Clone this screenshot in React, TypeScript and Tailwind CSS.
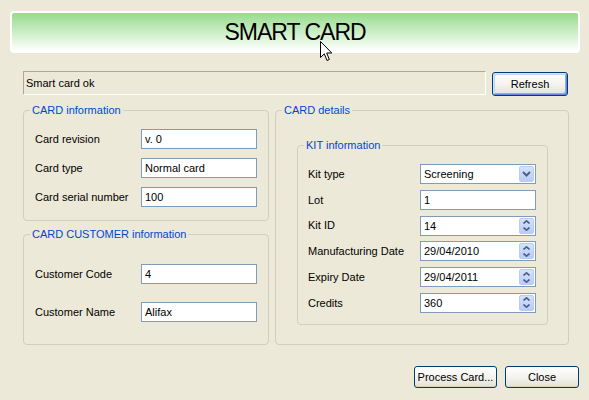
import React from "react";

type Kids = { children?: React.ReactNode };

function Group({ title, className, children }: { title: string; className: string } & Kids) {
  return (
    <div className={`rounded-[4px] border border-[#D0D0BF] ${className}`}>
      <div className="-mt-[7px] ml-[6px] w-fit bg-[#ECE9D8] px-[2px] leading-[13px] text-[#0046D5]">{title}</div>
      {children}
    </div>
  );
}

function TextBox({ value }: { value: string }) {
  return (
    <div className="h-[20px] w-[116px] border border-[#7F9DB9] bg-white pl-[3px] leading-[18px]">{value}</div>
  );
}

function Chevron({ up, big }: { up?: boolean; big?: boolean }) {
  if (big) {
    return (
      <svg width="9" height="6" viewBox="0 0 9 6">
        <polyline points="1,1 4.5,4.5 8,1" fill="none" stroke="#4D6185" strokeWidth="2" />
      </svg>
    );
  }
  return (
    <svg width="7" height="4" viewBox="0 0 7 4">
      <polyline
        points={up ? "0.5,3.5 3.5,0.8 6.5,3.5" : "0.5,0.5 3.5,3.2 6.5,0.5"}
        fill="none"
        stroke="#4D6185"
        strokeWidth="1.6"
      />
    </svg>
  );
}

function SpinBox({ value }: { value: string }) {
  return (
    <div className="flex h-[20px] w-[116px] border border-[#7F9DB9] bg-white p-[1px]">
      <span className="flex-1 pl-[2px] leading-[16px]">{value}</span>
      <div className="flex w-[15px] flex-col items-center justify-center gap-[3px] rounded-[2px] border border-[#B9CBF6] bg-gradient-to-b from-[#D6E2FD] to-[#B8CCF8]">
        <Chevron up />
        <Chevron />
      </div>
    </div>
  );
}

function ComboBox({ value }: { value: string }) {
  return (
    <div className="flex h-[20px] w-[116px] border border-[#7F9DB9] bg-white p-[1px]">
      <span className="flex-1 pl-[2px] leading-[16px]">{value}</span>
      <div className="flex w-[15px] items-center justify-center rounded-[2px] border border-[#B9CBF6] bg-gradient-to-b from-[#D6E2FD] to-[#B8CCF8]">
        <Chevron big />
      </div>
    </div>
  );
}

function XpButton({ label, className, focused }: { label: string; className: string; focused?: boolean }) {
  return (
    <div
      className={`flex items-center justify-center rounded-[3px] border border-[#003C74] bg-gradient-to-b from-white via-[#F4F3EE] to-[#E3E1D6] ${
        focused
          ? "shadow-[inset_1px_1px_0_#CEE7FF,inset_-1px_-1px_0_#6982EE,inset_2px_2px_0_#BCD4F6,inset_-2px_-2px_0_#89ADE4]"
          : "shadow-[inset_0_-1px_0_#D6D0C5]"
      } ${className}`}
    >
      {label}
    </div>
  );
}

export default function App() {
  return (
    <div className="relative flex h-[400px] w-[589px] flex-col overflow-hidden bg-[#ECE9D8] pt-[11px] font-['Liberation_Sans',Arial,sans-serif] text-[11px] text-black">
      {/* Header banner */}
      <div className="ml-[10px] mr-[9px] flex h-[42px] items-center justify-center rounded-[4px] border-2 border-white bg-gradient-to-b from-[#95DB8B] to-white text-[23px] tracking-[-1px]">
        SMART CARD
      </div>

      {/* Status row */}
      <div className="mt-[18px] flex items-start gap-[6px] pl-[23px]">
        <div className="h-[24px] w-[463px] border border-b-white border-l-[#ACA899] border-r-white border-t-[#ACA899] pl-[2px] leading-[22px]">
          Smart card ok
        </div>
        <XpButton label="Refresh" focused className="mt-[1px] h-[24px] w-[76px]" />
      </div>

      {/* Main groups */}
      <div className="mt-[14px] flex gap-[6px] pl-[23px]">
        <div className="flex flex-col gap-[13px]">
          <Group title="CARD information" className="h-[111px] w-[246px]">
            <div className="mt-[12px] flex flex-col gap-[9px] pl-[11px]">
              {[
                ["Card revision", "v. 0"],
                ["Card type", "Normal card"],
                ["Card serial number", "100"],
              ].map(([l, v]) => (
                <div key={l} className="flex items-center">
                  <span className="w-[106px]">{l}</span>
                  <TextBox value={v} />
                </div>
              ))}
            </div>
          </Group>
          <Group title="CARD CUSTOMER information" className="h-[111px] w-[246px]">
            <div className="mt-[23px] flex flex-col gap-[18px] pl-[11px]">
              {[
                ["Customer Code", "4"],
                ["Customer Name", "Alifax"],
              ].map(([l, v]) => (
                <div key={l} className="flex items-center">
                  <span className="w-[106px]">{l}</span>
                  <TextBox value={v} />
                </div>
              ))}
            </div>
          </Group>
        </div>

        <Group title="CARD details" className="h-[235px] w-[294px]">
          <div className="ml-[21px] mt-[28px]">
            <Group title="KIT information" className="h-[180px] w-[251px]">
              <div className="mt-[12px] flex flex-col gap-[5.8px] pl-[10px]">
                <div className="flex items-center">
                  <span className="w-[112px]">Kit type</span>
                  <ComboBox value="Screening" />
                </div>
                <div className="flex items-center">
                  <span className="w-[112px]">Lot</span>
                  <TextBox value="1" />
                </div>
                {[
                  ["Kit ID", "14"],
                  ["Manufacturing Date", "29/04/2010"],
                  ["Expiry Date", "29/04/2011"],
                  ["Credits", "360"],
                ].map(([l, v]) => (
                  <div key={l} className="flex items-center">
                    <span className="w-[112px]">{l}</span>
                    <SpinBox value={v} />
                  </div>
                ))}
              </div>
            </Group>
          </div>
        </Group>
      </div>

      {/* Bottom buttons */}
      <div className="mt-[21px] flex justify-end gap-[8px] pr-[10px]">
        <XpButton label="Process Card..." className="h-[22px] w-[83px]" />
        <XpButton label="Close" className="h-[22px] w-[74px]" />
      </div>

      {/* Mouse pointer */}
      <svg className="absolute left-[320px] top-[41px]" width="13" height="21" viewBox="0 0 13 21">
        <path d="M0.5,0.5 L0.5,16.5 L4.3,12.8 L7,19.5 L9.3,18.5 L6.7,12 L11.8,12 Z" fill="white" stroke="black" strokeWidth="1" />
      </svg>
    </div>
  );
}
